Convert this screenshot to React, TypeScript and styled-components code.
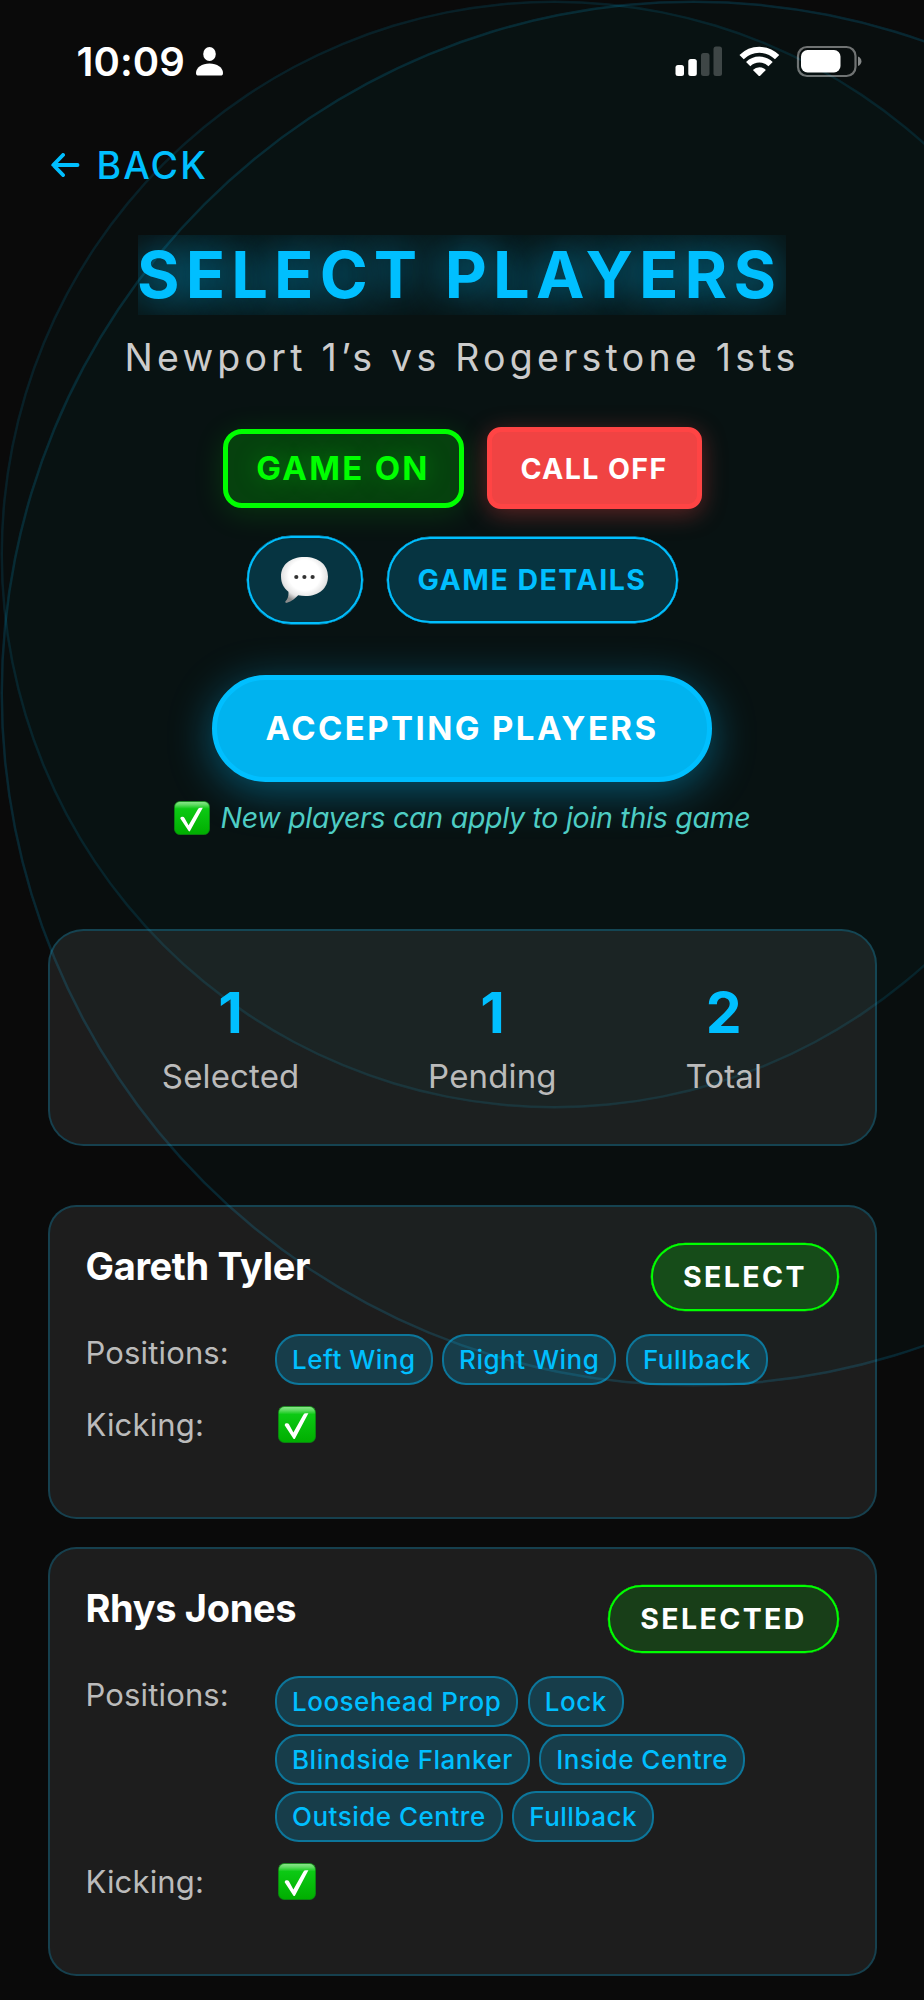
import React from "react";
import styled, { createGlobalStyle, css } from "styled-components";

const Global = createGlobalStyle`
  * { box-sizing: border-box; }
  html, body { margin: 0; background: #0a0a0a; }
  button { font: inherit; margin: 0; padding: 0; color: inherit; }
`;

const Screen = styled.div`
  position: relative;
  width: 924px;
  height: 2000px;
  overflow: hidden;
  background: #0a0a0a;
  font-family: Inter, "Liberation Sans", sans-serif;
  color: #fff;
`;

const Ring = styled.div<{ $size: number; $left: number; $alpha: number }>`
  position: absolute;
  top: 1px;
  left: ${(p) => p.$left}px;
  width: ${(p) => p.$size}px;
  height: ${(p) => p.$size}px;
  border-radius: 50%;
  border: 2px solid rgba(0, 191, 255, ${(p) => p.$alpha});
  box-shadow: 0 0 0 0.5px rgba(0, 191, 255, ${(p) => p.$alpha});
  background: rgba(16, 200, 225, 0.022);
`;

const Content = styled.div`
  position: relative;
  display: flex;
  flex-direction: column;
  padding: 0 47.5px;
`;

const StatusBar = styled.div`
  display: flex;
  justify-content: space-between;
  height: 124px;
  padding: 39px 15px 0 29px;
`;

const Clock = styled.div`
  display: flex;
  gap: 11px;
  height: 44px;
  align-items: center;
  font-size: 40px;
  font-weight: 600;
  letter-spacing: 0.1px;
`;

const StatusIcons = styled.svg`
  width: 188px;
  height: 44px;
`;

const Back = styled.button`
  display: flex;
  align-items: center;
  align-self: flex-start;
  gap: 17px;
  height: 82px;
  padding-left: 3px;
  border: 0;
  background: none;
  color: #00bfff;
  font-size: 37.5px;
  font-weight: 550;
  letter-spacing: 2.1px;
`;

const Header = styled.header`
  display: flex;
  flex-direction: column;
  align-items: center;
  height: 723px;
  padding-top: 29px;
`;

const Title = styled.h1`
  margin: 0;
  width: 648px;
  height: 80px;
  overflow: hidden;
  line-height: 80px;
  font-size: 65px;
  font-weight: 700;
  letter-spacing: 6.1px;
  text-indent: -1px;
  white-space: nowrap;
  color: #00bfff;
  text-shadow: 0 0 44px rgba(0, 191, 255, 0.85);
`;

const Subtitle = styled.p`
  margin: 20px 0 0;
  height: 46px;
  line-height: 46px;
  font-size: 37.5px;
  font-weight: 400;
  letter-spacing: 4.25px;
  white-space: nowrap;
  color: #ccc;
`;

const ButtonRow = styled.div<{ $top: number; $gap: number }>`
  display: flex;
  justify-content: center;
  align-items: center;
  margin-top: ${(p) => p.$top}px;
  gap: ${(p) => p.$gap}px;
`;

const pill = css`
  display: flex;
  align-items: center;
  justify-content: center;
  white-space: nowrap;
`;

const GameOn = styled.button`
  ${pill}
  width: 241px;
  height: 79px;
  border: 5px solid #00ff00;
  border-radius: 19px;
  background: rgba(0, 255, 0, 0.2);
  box-shadow: 0 5px 30px rgba(0, 255, 0, 0.15);
  color: #00ff00;
  font-size: 33px;
  font-weight: 700;
  letter-spacing: 2.3px;
  text-shadow: 0 0 24px rgba(0, 255, 0, 0.35);
`;

const CallOff = styled.button`
  ${pill}
  width: 215px;
  height: 82px;
  border: 5px solid #ff4444;
  border-radius: 14px;
  background: #f04343;
  box-shadow: 0 5px 24px rgba(255, 68, 68, 0.35);
  font-size: 28.5px;
  font-weight: 700;
  letter-spacing: 1.4px;
`;

const Outline = styled.button<{ $width: number; $height: number }>`
  ${pill}
  width: ${(p) => p.$width}px;
  height: ${(p) => p.$height}px;
  border: 2px solid #00bfff;
  border-radius: 44px;
  background: rgba(0, 191, 255, 0.2);
  box-shadow: 0 0 0 0.4px #00bfff;
  color: #00bfff;
  font-size: 28.5px;
  font-weight: 650;
  letter-spacing: 1.5px;
`;

const Accepting = styled.button`
  ${pill}
  width: 500px;
  height: 107px;
  margin-top: 51.5px;
  padding-bottom: 2px;
  border: 5px solid #00bfff;
  border-radius: 54px;
  background: #00b3ef;
  box-shadow: 0 9px 44px rgba(0, 191, 255, 0.4);
  font-size: 33px;
  font-weight: 700;
  letter-spacing: 2.4px;
`;

const Notice = styled.p`
  display: flex;
  align-items: center;
  gap: 11px;
  height: 36px;
  line-height: 36px;
  margin: 17.5px 0 0;
  font-size: 28.5px;
  font-style: italic;
  letter-spacing: -0.27px;
  white-space: nowrap;
  color: #4ecdc4;
`;

const panel = css`
  border: 2px solid rgba(0, 191, 255, 0.22);
  background: rgba(255, 255, 255, 0.08);
`;

const Stats = styled.section`
  ${panel}
  display: flex;
  justify-content: space-around;
  height: 217px;
  padding: 48px 48px 0;
  border-radius: 35.5px;
`;

const Stat = styled.div`
  display: flex;
  flex-direction: column;
  align-items: center;
`;

const StatValue = styled.div`
  height: 68px;
  line-height: 68px;
  font-size: 57px;
  font-weight: 700;
  color: #00bfff;
`;

const StatLabel = styled.div`
  margin-top: 9px;
  height: 40px;
  line-height: 40px;
  font-size: 33px;
  letter-spacing: 0.15px;
  color: #bbb;
`;

const Card = styled.article<{ $top: number; $height: number }>`
  ${panel}
  margin-top: ${(p) => p.$top}px;
  height: ${(p) => p.$height}px;
  padding: 35.5px 35.5px 0 36px;
  border-radius: 28.4px;
`;

const CardHead = styled.div`
  display: flex;
  justify-content: space-between;
  align-items: flex-start;
  height: 91.5px;
`;

const Name = styled.h2`
  margin: 0;
  line-height: 46px;
  font-size: 38px;
  font-weight: 700;
  letter-spacing: -0.35px;
`;

const Select = styled.button<{ $width: number; $alpha: number }>`
  ${pill}
  width: ${(p) => p.$width}px;
  height: 68px;
  border: 2px solid #00ff00;
  border-radius: 34px;
  background: rgba(0, 255, 0, ${(p) => p.$alpha});
  box-shadow: 0 0 0 0.3px #00ff00;
  font-size: 28.5px;
  font-weight: 700;
  letter-spacing: 2.4px;
`;

const Detail = styled.div`
  display: flex;
  align-items: flex-start;
  margin-bottom: 20.5px;
`;

const Label = styled.div`
  width: 189.5px;
  flex: none;
  line-height: 37px;
  font-size: 31px;
  letter-spacing: 0.15px;
  color: #bbb;
`;

const Tags = styled.div`
  display: flex;
  flex-wrap: wrap;
  gap: 6.7px 9.5px;
`;

const Tag = styled.span`
  ${pill}
  height: 51px;
  padding: 0 15px;
  border: 2px solid rgba(0, 191, 255, 0.45);
  border-radius: 24px;
  background: rgba(0, 191, 255, 0.2);
  color: #00bfff;
  font-size: 26px;
  font-weight: 500;
  letter-spacing: 0.5px;
`;

const CheckSlot = styled.div`
  padding-left: 2.5px;
  height: 37px;
  display: flex;
`;

const Check = ({ width, height }: { width: number; height: number }) => (
  <svg width={width} height={height} viewBox="0 0 37 34" preserveAspectRatio="none">
    <defs>
      <linearGradient id="checkFill" x1="0" y1="0" x2="0" y2="1">
        <stop offset="0" stopColor="#8fe58f" />
        <stop offset="0.1" stopColor="#5fdc62" />
        <stop offset="0.22" stopColor="#0cc914" />
        <stop offset="1" stopColor="#00ae00" />
      </linearGradient>
    </defs>
    <rect x="0.5" y="0.5" width="36" height="33" rx="5.500" fill="url(#checkFill)" stroke="#0a8f10" strokeOpacity="0.7" />
    <path d="M6.500 17.600q0-1.600 1.600-1.800 2-.3 2.700 1.200L15 24.300 24.700 8q.8-1.300 2.400-1.300h2.500L16.600 29.800q-.8 1.200-1.700 0z" fill="#fff" />
  </svg>
);

const Bubble = () => (
  <svg width="47" height="46" viewBox="0 0 47 46">
    <defs>
      <radialGradient id="bubbleFill" cx="0.5" cy="0.4" r="0.6">
        <stop offset="0.55" stopColor="#fff" />
        <stop offset="0.8" stopColor="#e4e4e4" />
        <stop offset="1" stopColor="#8c8c8c" />
      </radialGradient>
    </defs>
    <path
      d="M23.500 0C38 0 47 8 47 19.500S38.500 39 24.500 39c-2.600 0-5-.2-7.300-.7-3 3.200-6.700 6.400-11.200 7.500-1.600.4-2.300-.5-1.300-1.700 2.400-2.800 3-5.800 2.700-9.300C2.700 31.200 0 26 0 19.500 0 8 9 0 23.500 0z"
      fill="url(#bubbleFill)"
    />
    <circle cx="15.300" cy="20" r="2.100" fill="#333" />
    <circle cx="23.400" cy="20" r="2.100" fill="#333" />
    <circle cx="31.600" cy="20" r="2.100" fill="#333" />
  </svg>
);

const StatusGlyphs = () => (
  <StatusIcons viewBox="674 39 188 44">
    <g fill="#fff">
      <rect x="675.500" y="65" width="8.500" height="11" rx="2.500" />
      <rect x="688.300" y="59" width="8.500" height="17" rx="2.500" />
      <rect x="701" y="53" width="8.500" height="23" rx="2.500" opacity="0.22" />
      <rect x="713.500" y="46.500" width="8.500" height="29.500" rx="2.500" opacity="0.22" />
    </g>
    <g fill="none" stroke="#fff" strokeWidth="6">
      <path d="M741.600 57.200a25 25 0 0 1 35.500 0" />
      <path d="M748.200 64.200a15.800 15.800 0 0 1 22.400 0" />
    </g>
    <path d="M752.900 69.900a9.500 9.500 0 0 1 13 0L760.200 75.700q-.8.800-1.600 0z" fill="#fff" />
    <rect x="798" y="47" width="57.500" height="29" rx="9" fill="none" stroke="#fff" strokeOpacity="0.42" strokeWidth="2.200" />
    <rect x="801" y="50" width="39.500" height="22.500" rx="6.500" fill="#fff" />
    <path d="M858 56.500c4.600 1.600 4.600 8 0 9.600z" fill="#fff" opacity="0.5" />
  </StatusIcons>
);

type Player = {
  name: string;
  action: string;
  buttonWidth: number;
  alpha: number;
  positions: string[];
  top: number;
  height: number;
};

const players: Player[] = [
  { name: "Gareth Tyler", action: "SELECT", buttonWidth: 188, alpha: 0.2, positions: ["Left Wing", "Right Wing", "Fullback"], top: 59, height: 314 },
  { name: "Rhys Jones", action: "SELECTED", buttonWidth: 231, alpha: 0.15, positions: ["Loosehead Prop", "Lock", "Blindside Flanker", "Inside Centre", "Outside Centre", "Fullback"], top: 28, height: 429 },
];

const stats = [
  { value: 1, label: "Selected" },
  { value: 1, label: "Pending" },
  { value: 2, label: "Total" },
];

export default function App() {
  return (
    <Screen>
      <Global />
      <Ring $size={1385} $left={1} $alpha={0.15} />
      <Ring $size={1107} $left={1} $alpha={0.11} />
      <Content>
        <StatusBar>
          <Clock>
            10:09
            <svg width="27" height="29" viewBox="0 0 27 29" fill="#fff">
              <ellipse cx="13.500" cy="7" rx="6.300" ry="7" />
              <path d="M0 26C0 20.500 6 16.500 13.500 16.500S27 20.500 27 26q0 2.600-2.500 2.600h-22Q0 28.600 0 26z" />
            </svg>
          </Clock>
          <StatusGlyphs />
        </StatusBar>
        <Back>
          <svg width="29" height="24" viewBox="0 0 29 24" fill="none" stroke="#00bfff" strokeWidth="3.900" strokeLinecap="round" strokeLinejoin="round">
            <path d="M26.500 12H2.500M12 2L2.300 12 12 22" />
          </svg>
          BACK
        </Back>
        <Header>
          <Title>SELECT PLAYERS</Title>
          <Subtitle>Newport 1’s vs Rogerstone 1sts</Subtitle>
          <ButtonRow $top={46} $gap={23}>
            <GameOn>GAME ON</GameOn>
            <CallOff>CALL OFF</CallOff>
          </ButtonRow>
          <ButtonRow $top={26.5} $gap={24}>
            <Outline $width={116} $height={88} aria-label="Chat"><Bubble /></Outline>
            <Outline $width={291} $height={86}>GAME DETAILS</Outline>
          </ButtonRow>
          <Accepting>ACCEPTING PLAYERS</Accepting>
          <Notice><Check width={36} height={34} />New players can apply to join this game</Notice>
        </Header>
        <Stats>
          {stats.map((s) => (
            <Stat key={s.label}>
              <StatValue>{s.value}</StatValue>
              <StatLabel>{s.label}</StatLabel>
            </Stat>
          ))}
        </Stats>
        {players.map((p) => (
          <Card key={p.name} $top={p.top} $height={p.height}>
            <CardHead>
              <Name>{p.name}</Name>
              <Select $width={p.buttonWidth} $alpha={p.alpha}>{p.action}</Select>
            </CardHead>
            <Detail>
              <Label>Positions:</Label>
              <Tags>{p.positions.map((t) => <Tag key={t}>{t}</Tag>)}</Tags>
            </Detail>
            <Detail>
              <Label>Kicking:</Label>
              <CheckSlot><Check width={38} height={37} /></CheckSlot>
            </Detail>
          </Card>
        ))}
      </Content>
    </Screen>
  );
}
